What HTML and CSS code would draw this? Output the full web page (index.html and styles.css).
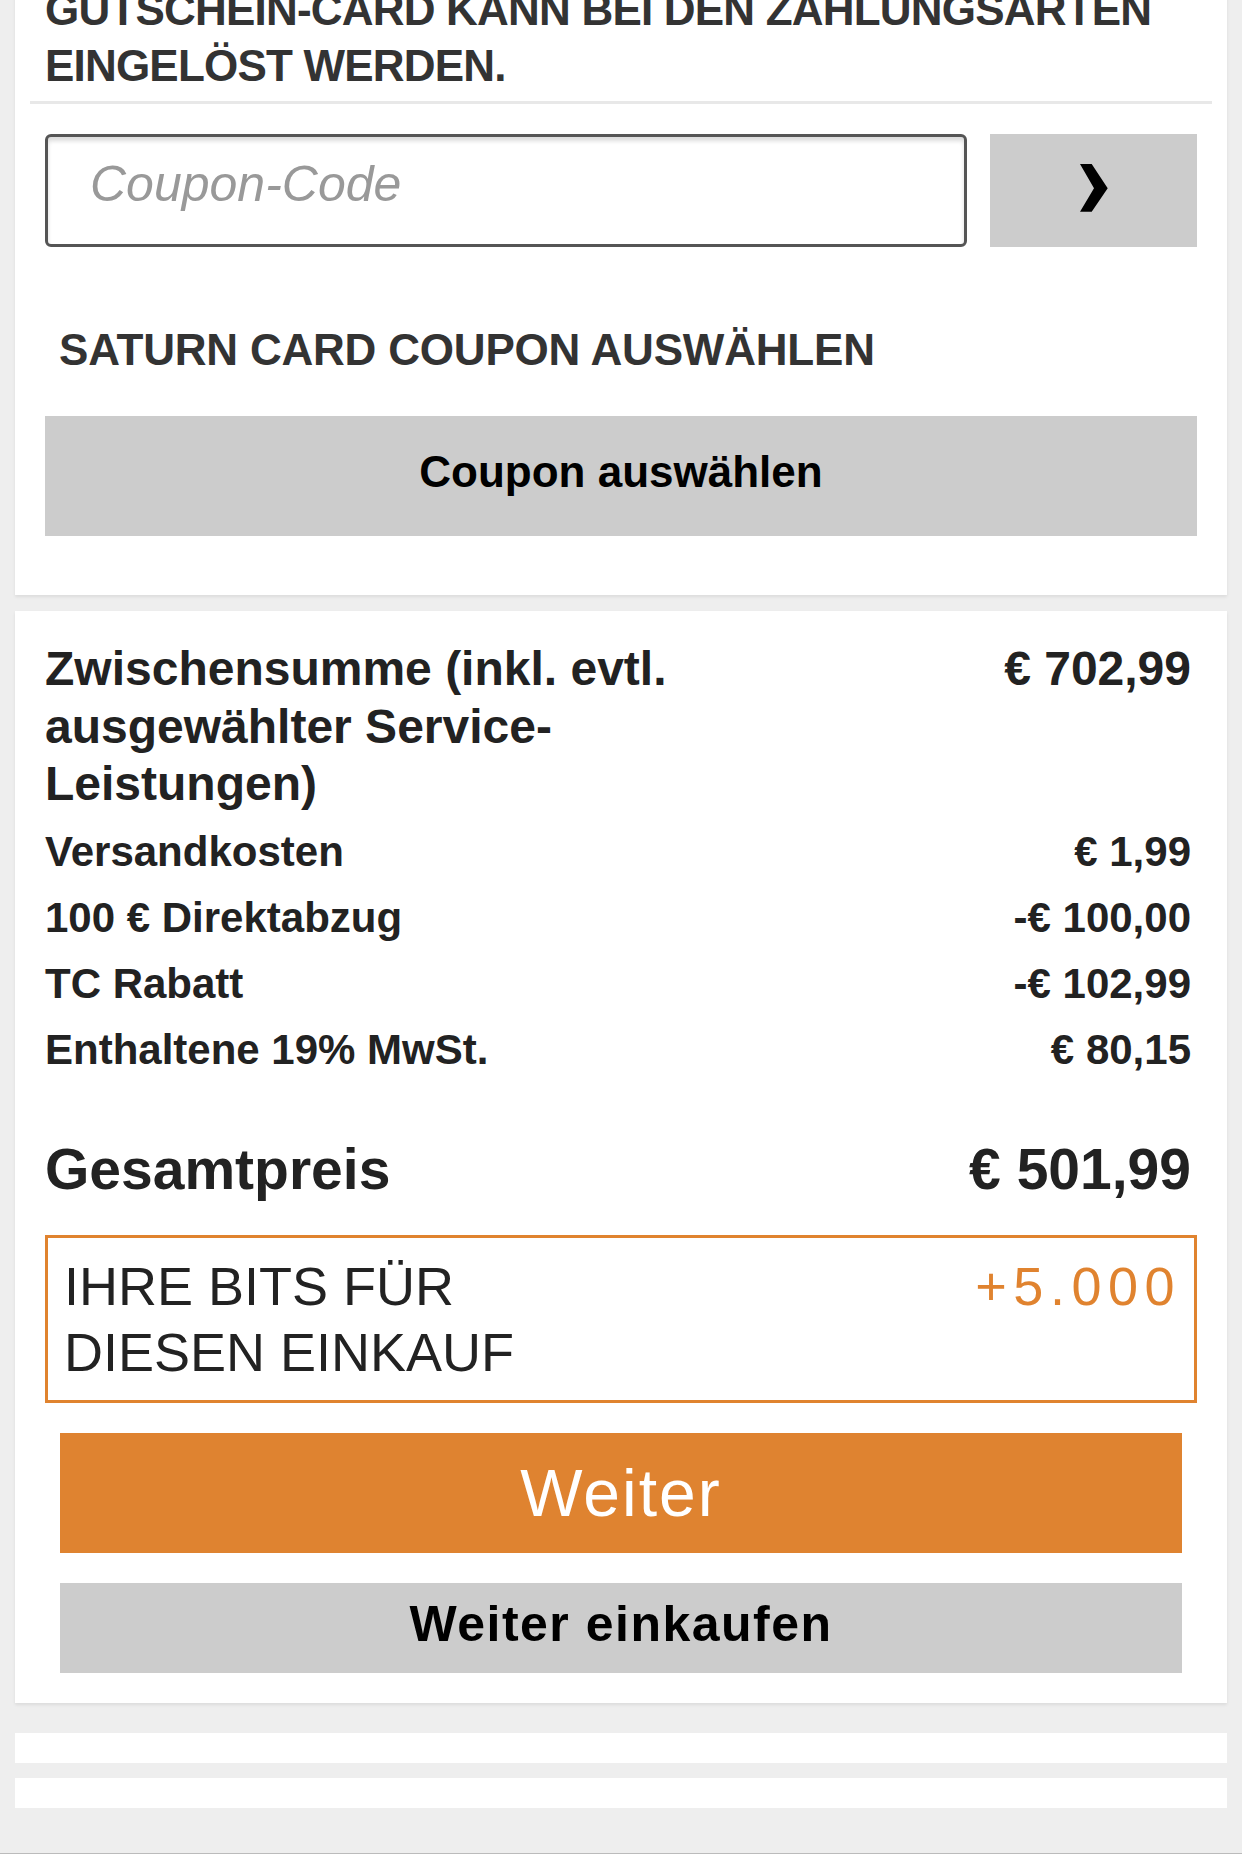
FILE: index.html
```html
<!DOCTYPE html>
<html lang="de">
<head>
<meta charset="utf-8">
<title>Warenkorb</title>
<link rel="stylesheet" href="styles.css">
</head>
<body>
<div class="page">
  <section class="card card-coupon">
    <h2 class="card-heading">GUTSCHEIN-CARD KANN BEI DEN ZAHLUNGSARTEN EINGELÖST WERDEN.</h2>
    <hr class="divider">
    <div class="coupon-row">
      <input class="coupon-input" type="text" placeholder="Coupon-Code">
      <button class="coupon-submit" type="button" aria-label="Einlösen">
        <svg width="28" height="48" viewBox="0 0 28 48"><polygon points="0,0 11.7,0 27.7,24.3 11.7,47.7 0,47.7 14,24.3" fill="#000"/></svg>
      </button>
    </div>
    <h3 class="saturn-heading">SATURN CARD COUPON AUSWÄHLEN</h3>
    <button class="btn btn-gray btn-select" type="button">Coupon auswählen</button>
  </section>

  <section class="card card-summary">
    <div class="row row-sub">
      <span class="label">Zwischensumme (inkl. evtl. ausgewählter Service-Leistungen)</span>
      <span class="val">€ 702,99</span>
    </div>
    <div class="row row-small first-small">
      <span class="label">Versandkosten</span>
      <span class="val">€ 1,99</span>
    </div>
    <div class="row row-small">
      <span class="label">100 € Direktabzug</span>
      <span class="val">-€ 100,00</span>
    </div>
    <div class="row row-small">
      <span class="label">TC Rabatt</span>
      <span class="val">-€ 102,99</span>
    </div>
    <div class="row row-small">
      <span class="label">Enthaltene 19% MwSt.</span>
      <span class="val">€ 80,15</span>
    </div>
    <div class="row row-total">
      <span class="label">Gesamtpreis</span>
      <span class="val">€ 501,99</span>
    </div>
    <div class="bits">
      <span class="bits-label">IHRE BITS FÜR<br>DIESEN EINKAUF</span>
      <span class="bits-val">+5.000</span>
    </div>
    <button class="btn btn-orange" type="button">Weiter</button>
    <button class="btn btn-gray btn-continue" type="button">Weiter einkaufen</button>
  </section>

  <div class="strip"></div>
  <div class="strip strip-second"></div>
</div>
<div class="bottom-line"></div>
</body>
</html>
```

FILE: styles.css
```css
html, body {
  margin: 0;
  padding: 0;
}
body {
  background: #eeeeee;
  font-family: "Liberation Sans", Arial, sans-serif;
  color: #222;
  height: 1854px;
  overflow: hidden;
}
.page {
  padding: 0 15px;
}
.card {
  background: #fff;
  box-shadow: 0 2px 3px rgba(0, 0, 0, 0.08);
}
.card-coupon {
  margin-top: -38px;
  padding: 20px 30px 59px;
}
.card-heading {
  margin: 0;
  font-size: 44px;
  line-height: 56px;
  font-weight: bold;
  letter-spacing: -0.8px;
  color: #333;
}
.divider {
  border: 0;
  height: 3px;
  background: #e8e8e8;
  margin: 7px -15px 0;
}
.coupon-row {
  display: flex;
  gap: 23px;
  margin-top: 30px;
  height: 113px;
}
.coupon-input {
  flex: 1;
  min-width: 0;
  box-sizing: border-box;
  height: 113px;
  margin: 0;
  border: 3px solid #555;
  border-radius: 6px;
  box-shadow: inset 0 4px 4px rgba(0, 0, 0, 0.14);
  padding: 0 40px 14px 42px;
  font-family: "Liberation Sans", Arial, sans-serif;
  font-size: 50px;
  color: #222;
  background: #fff;
  outline: none;
}
.coupon-input::placeholder {
  color: #999;
  font-style: italic;
}
.coupon-submit {
  width: 207px;
  height: 113px;
  margin: 0;
  padding: 0 0 6px;
  border: 0;
  background: #cccccc;
  display: flex;
  align-items: center;
  justify-content: center;
}
.saturn-heading {
  margin: 75px 0 0 14px;
  font-size: 44px;
  line-height: 56px;
  font-weight: bold;
  letter-spacing: -0.2px;
  color: #333;
}
.btn {
  display: flex;
  align-items: center;
  justify-content: center;
  border: 0;
  margin: 0;
  padding: 0;
  font-family: "Liberation Sans", Arial, sans-serif;
  cursor: pointer;
}
.btn-gray {
  background: #cccccc;
  color: #000;
}
.btn-select {
  width: 100%;
  height: 120px;
  margin-top: 38px;
  font-size: 44px;
  font-weight: bold;
  padding-bottom: 8px;
}
.card-summary {
  margin-top: 16px;
  padding: 29px 30px 30px;
}
.row {
  display: flex;
  justify-content: space-between;
  align-items: flex-start;
  padding-right: 6px;
  font-weight: bold;
  color: #222;
}
.row .label {
  max-width: 700px;
}
.row .val {
  white-space: nowrap;
}
.row-sub {
  font-size: 48px;
  line-height: 57.5px;
}
.row-small {
  font-size: 42px;
  line-height: 66px;
}
.first-small {
  margin-top: 6px;
}
.row-total {
  font-size: 57px;
  line-height: 67px;
  margin-top: 53px;
}
.bits {
  margin-top: 32px;
  border: 3px solid #e0832f;
  padding: 15px 19px 15px 16px;
  display: flex;
  justify-content: space-between;
  align-items: flex-start;
  font-size: 54px;
  line-height: 66px;
}
.bits-label {
  color: #222;
}
.bits-val {
  color: #e0832f;
  letter-spacing: 6.5px;
  margin-right: -6px;
}
.btn-orange {
  width: calc(100% - 30px);
  margin: 30px 15px 0;
  height: 120px;
  background: #df8330;
  color: #fff;
  font-size: 66px;
  letter-spacing: 2px;
}
.btn-continue {
  width: calc(100% - 30px);
  margin: 30px 15px 0;
  height: 90px;
  font-size: 50px;
  font-weight: bold;
  letter-spacing: 1.5px;
  padding-bottom: 8px;
}
.strip {
  background: #fff;
  height: 30px;
  margin-top: 30px;
}
.strip-second {
  margin-top: 15px;
}
.bottom-line {
  margin-top: 45px;
  height: 1px;
  background: #bbbbbb;
}
```
